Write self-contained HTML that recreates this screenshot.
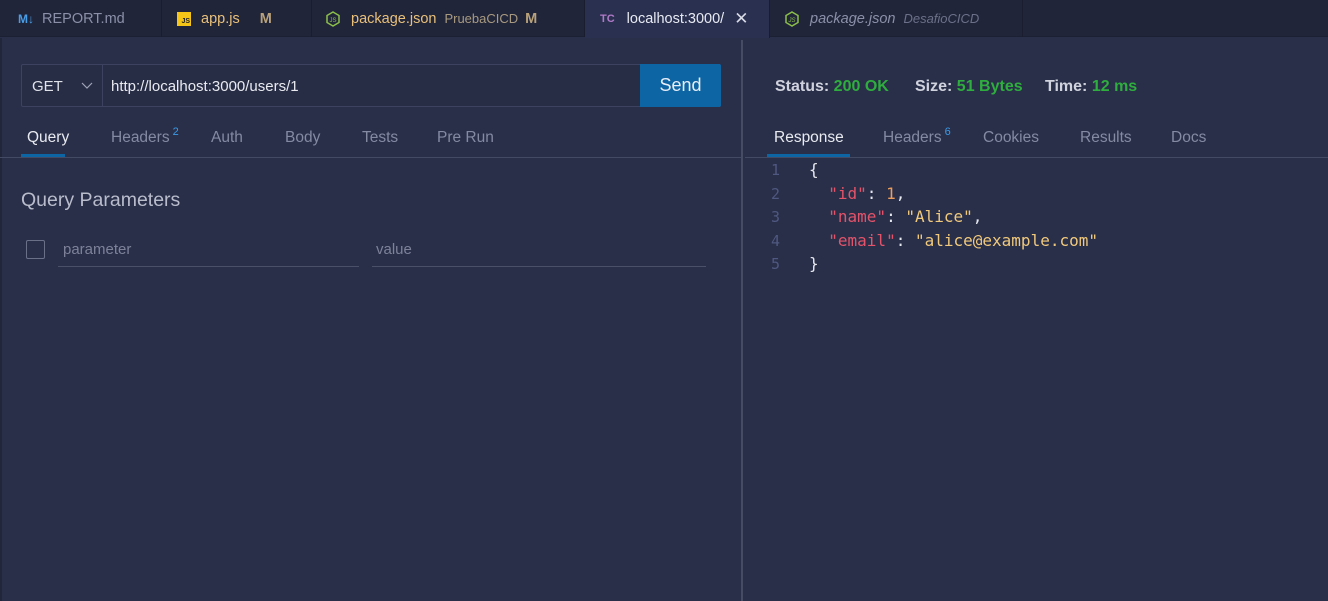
<!DOCTYPE html>
<html><head><meta charset="utf-8"><style>
*{box-sizing:border-box;margin:0;padding:0}
body{width:1328px;height:601px;overflow:hidden;background:#292f49;font-family:"Liberation Sans","DejaVu Sans",sans-serif;position:relative;color:#c8ccd8}
.tabs{position:absolute;left:0;top:0;width:1328px;height:37px;background:#21253a;border-bottom:1px solid #1c2033}
.tab{position:absolute;top:0;height:37px;display:flex;align-items:center;font-size:14.5px;border-right:1px solid #1a1d2e}
.abs{position:absolute}
.mono{font-family:"DejaVu Sans Mono","Liberation Mono",monospace;font-size:16px}
.t{font-size:15.5px}
</style></head><body>
<div class="tabs">
 <div class="tab" style="left:0;width:162px;padding-left:18px;color:#8b90a8"><span style="color:#4a9ee8;font-weight:bold;font-size:12px;margin-right:8px">M↓</span>REPORT.md</div>
 <div class="tab" style="left:162px;width:150px;padding-left:15px;color:#e8c07a"><span style="display:inline-block;width:14px;height:14px;background:#f5c518;color:#222;font-size:7px;font-weight:bold;text-align:right;line-height:20px;padding-right:1px;margin-right:10px">JS</span>app.js<span style="color:#b9a27a;font-weight:bold;margin-left:20px">M</span></div>
 <div class="tab" style="left:312px;width:273px;padding-left:14px;color:#e8c07a"><svg width="14" height="16" viewBox="0 0 14 16" style="margin-right:11px"><path d="M7 1L13 4.5V11.5L7 15L1 11.5V4.5Z" fill="none" stroke="#8cc04a" stroke-width="1.5"/><text x="7" y="11" font-size="6" fill="#8cc04a" text-anchor="middle" font-family="Liberation Sans">JS</text></svg>package.json<span style="color:#a89a80;font-size:13px;margin-left:8px">PruebaCICD</span><span style="color:#b9a27a;font-weight:bold;margin-left:7px">M</span></div>
 <div class="tab" style="left:585px;width:185px;padding-left:15px;background:#2a3050;color:#e8eaf2;height:38px"><span style="color:#b07ac8;font-weight:bold;font-size:11px;margin-right:12px">TC</span>localhost:3000/<span style="margin-left:10px;font-size:17px;color:#d8dae5">✕</span></div>
 <div class="tab" style="left:770px;width:253px;padding-left:15px;color:#8b90a8;font-style:italic"><svg width="14" height="16" viewBox="0 0 14 16" style="margin-right:11px"><path d="M7 1L13 4.5V11.5L7 15L1 11.5V4.5Z" fill="none" stroke="#8cc04a" stroke-width="1.5"/><text x="7" y="11" font-size="6" fill="#8cc04a" text-anchor="middle" font-family="Liberation Sans">JS</text></svg>package.json<span style="color:#6c7088;font-size:13px;margin-left:8px">DesafioCICD</span></div>
</div>
<div class="abs" style="left:0;top:38px;width:2px;height:563px;background:#22263a"></div>
<div class="abs" style="left:741px;top:40px;width:2px;height:561px;background:#464c63"></div>

<div class="abs" style="left:21px;top:64px;width:700px;height:43px;border:1px solid #3c4260;border-radius:2px;background:#282d46"></div>
<div class="abs" style="left:102px;top:65px;width:1px;height:41px;background:#3c4260"></div>
<div class="abs" style="left:32px;top:78px;font-size:15px;color:#e0e2ea">GET</div>
<svg class="abs" style="left:81px;top:82px" width="12" height="8"><path d="M1 1L6 6L11 1" fill="none" stroke="#a0a4b8" stroke-width="1.2"/></svg>
<div class="abs" style="left:111px;top:78px;font-size:15px;color:#e8eaf0">http://localhost:3000/users/1</div>
<div class="abs" style="left:640px;top:64px;width:81px;height:43px;background:#0e65a4;border-radius:0 2px 2px 0;color:#e8eef8;font-size:18px;text-align:center;line-height:43px">Send</div>

<div class="abs" style="left:0;top:157px;width:741px;height:1px;background:#434a63"></div>
<div class="abs t" style="left:27px;top:129px;color:#e8eaf0">Query</div>
<div class="abs" style="left:21px;top:154px;width:44px;height:3px;background:#0e65a4"></div>
<div class="abs t" style="left:111px;top:129px;color:#858aa3">Headers<span style="color:#3a9be8;font-size:11px;position:relative;top:-7px;margin-left:3px">2</span></div>
<div class="abs t" style="left:211px;top:129px;color:#858aa3">Auth</div>
<div class="abs t" style="left:285px;top:129px;color:#858aa3">Body</div>
<div class="abs t" style="left:362px;top:129px;color:#858aa3">Tests</div>
<div class="abs t" style="left:437px;top:129px;color:#858aa3">Pre Run</div>

<div class="abs" style="left:21px;top:189px;font-size:19.5px;color:#b8bccb">Query Parameters</div>
<div class="abs" style="left:26px;top:240px;width:19px;height:19px;border:1px solid #6a7088;border-radius:2px"></div>
<div class="abs" style="left:63px;top:241px;font-size:15px;color:#7d8299">parameter</div>
<div class="abs" style="left:58px;top:266px;width:301px;height:1px;background:#4a5068"></div>
<div class="abs" style="left:376px;top:241px;font-size:15px;color:#7d8299">value</div>
<div class="abs" style="left:372px;top:266px;width:334px;height:1px;background:#4a5068"></div>

<div class="abs" style="left:775px;top:78px;font-size:16px;font-weight:bold;color:#d0d3de">Status: <span style="color:#2fad3e">200 OK</span></div>
<div class="abs" style="left:915px;top:78px;font-size:16px;font-weight:bold;color:#d0d3de">Size: <span style="color:#2fad3e">51 Bytes</span></div>
<div class="abs" style="left:1045px;top:78px;font-size:16px;font-weight:bold;color:#d0d3de">Time: <span style="color:#2fad3e">12 ms</span></div>

<div class="abs" style="left:745px;top:157px;width:583px;height:1px;background:#434a63"></div>
<div class="abs t" style="left:774px;top:129px;color:#e8eaf0">Response</div>
<div class="abs" style="left:767px;top:154px;width:83px;height:3px;background:#0e65a4"></div>
<div class="abs t" style="left:883px;top:129px;color:#858aa3">Headers<span style="color:#3a9be8;font-size:11px;position:relative;top:-7px;margin-left:3px">6</span></div>
<div class="abs t" style="left:983px;top:129px;color:#858aa3">Cookies</div>
<div class="abs t" style="left:1080px;top:129px;color:#858aa3">Results</div>
<div class="abs t" style="left:1171px;top:129px;color:#858aa3">Docs</div>

<div class="abs mono" style="left:771px;top:159px;line-height:23.5px;color:#4f5880;font-size:15px">1<br>2<br>3<br>4<br>5</div>
<div class="abs mono" style="left:809px;top:158px;line-height:23.5px;color:#e6e8ef;white-space:pre">{
  <span style="color:#e4536a">"id"</span>: <span style="color:#ee9d5a">1</span>,
  <span style="color:#e4536a">"name"</span>: <span style="color:#f1c97c">"Alice"</span>,
  <span style="color:#e4536a">"email"</span>: <span style="color:#f1c97c">"alice@example.com"</span>
}</div>
</body></html>
